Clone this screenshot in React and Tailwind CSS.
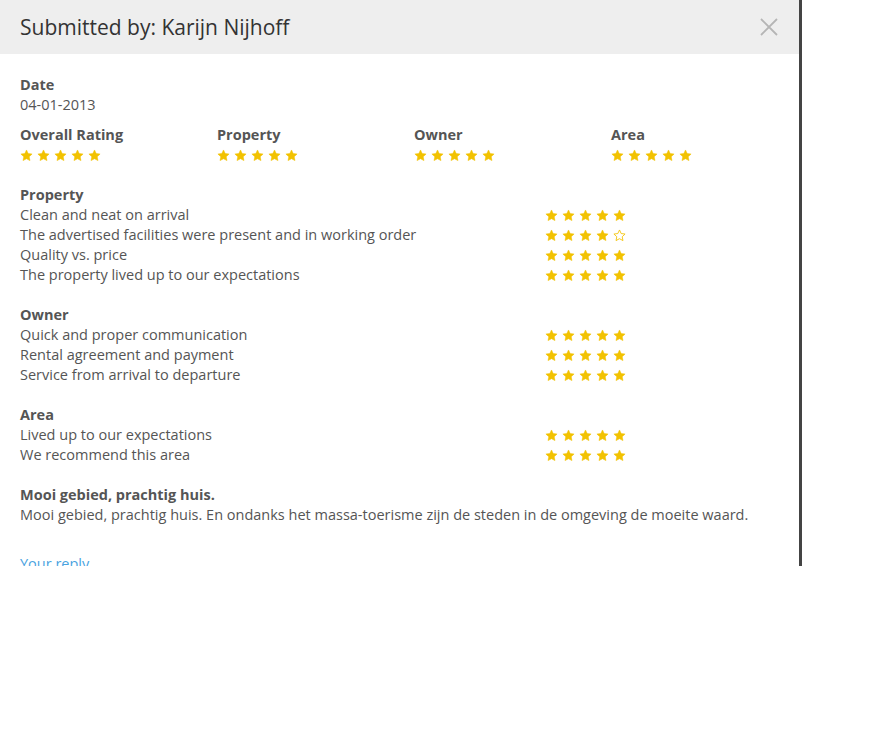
import React from "react";

function Star({ filled = true }) {
  return (
    <svg width="13" height="13" viewBox="0 0 24 24" className="shrink-0">
      <path
        d="M12 1.8l3.1 6.6 7.2.9-5.3 5 1.4 7.1L12 17.9l-6.4 3.5 1.4-7.1-5.3-5 7.2-.9z"
        fill={filled ? "#f2c200" : "none"}
        stroke="#f2c200"
        strokeWidth={filled ? 1 : 1.6}
        strokeLinejoin="round"
      />
    </svg>
  );
}

function Stars({ n = 5 }) {
  return (
    <div className="flex h-5 items-center gap-[4px]">
      {[0, 1, 2, 3, 4].map((i) => (
        <Star key={i} filled={i < n} />
      ))}
    </div>
  );
}

function Section({ title, rows }) {
  return (
    <div className="mt-5">
      <div className="font-bold">{title}</div>
      {rows.map(([label, n]) => (
        <div key={label} className="flex h-5 items-center">
          <div className="w-[525px]">{label}</div>
          <Stars n={n} />
        </div>
      ))}
    </div>
  );
}

export default function App() {
  return (
    <div
      className="h-[730px] w-[892px] bg-white text-[14.5px] leading-5 text-[#555]"
      style={{ fontFamily: '"Open Sans", "Liberation Sans", sans-serif' }}
    >
      <div className="flex h-[566px] w-[802px] flex-col overflow-hidden border-r-[3px] border-[#444]">
        <div className="flex h-[54px] shrink-0 items-center justify-between bg-[#eeeeee] pl-5 pr-[21px]">
          <div className="text-[21px] text-[#333]">Submitted by: Karijn Nijhoff</div>
          <svg width="18" height="18" viewBox="0 0 18 18">
            <path d="M1 1L17 17M17 1L1 17" stroke="#b5b5b5" strokeWidth="1.8" />
          </svg>
        </div>
        <div className="px-5 pt-[21px]">
          <div className="font-bold">Date</div>
          <div>04-01-2013</div>
          <div className="mt-[10px] grid grid-cols-[197px_197px_197px_197px]">
            {["Overall Rating", "Property", "Owner", "Area"].map((t) => (
              <div key={t}>
                <div className="font-bold">{t}</div>
                <Stars n={5} />
              </div>
            ))}
          </div>
          <Section
            title="Property"
            rows={[
              ["Clean and neat on arrival", 5],
              ["The advertised facilities were present and in working order", 4],
              ["Quality vs. price", 5],
              ["The property lived up to our expectations", 5],
            ]}
          />
          <Section
            title="Owner"
            rows={[
              ["Quick and proper communication", 5],
              ["Rental agreement and payment", 5],
              ["Service from arrival to departure", 5],
            ]}
          />
          <Section
            title="Area"
            rows={[
              ["Lived up to our expectations", 5],
              ["We recommend this area", 5],
            ]}
          />
          <div className="mt-5">
            <div className="font-bold">Mooi gebied, prachtig huis.</div>
            <div className="whitespace-nowrap">
              Mooi gebied, prachtig huis. En ondanks het massa-toerisme zijn de steden in de omgeving de moeite waard.
            </div>
          </div>
          <div className="mt-[29px]">
            <a className="text-[#4aa3df]">Your reply</a>
          </div>
        </div>
      </div>
    </div>
  );
}
